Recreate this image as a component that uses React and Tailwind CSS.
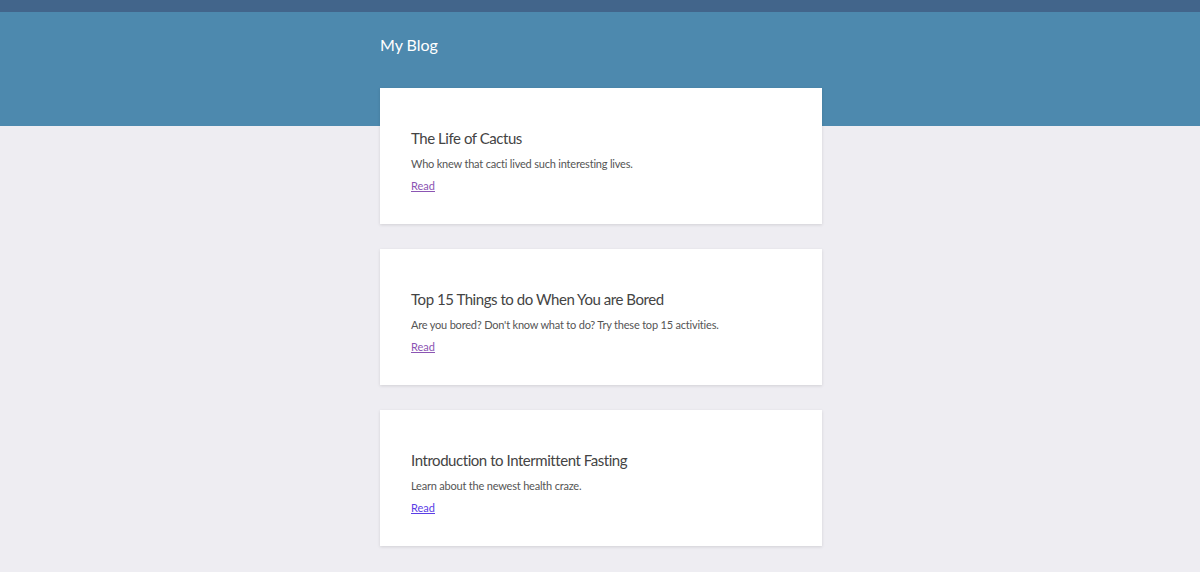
export default function App() {
  const posts = [
    { title: "The Life of Cactus", desc: "Who knew that cacti lived such interesting lives.", visited: true },
    { title: "Top 15 Things to do When You are Bored", desc: "Are you bored? Don't know what to do? Try these top 15 activities.", visited: true },
    { title: "Introduction to Intermittent Fasting", desc: "Learn about the newest health craze.", visited: false },
  ];
  return (
    <div className="min-h-[572px] bg-[#eeedf2] font-['Lato',sans-serif]">
      <div className="h-[12px] bg-[#42658b]" />
      <div className="h-[114px] bg-[#4d89ae]">
        <div className="mx-auto w-[442px] translate-x-[1px] pt-[23px] text-[16px] leading-[20px] text-white">My Blog</div>
      </div>
      <div className="mx-auto -mt-[38px] flex w-[442px] translate-x-[1px] flex-col gap-[25px] pb-[30px]">
        {posts.map((p) => (
          <div key={p.title} className="bg-white px-[31px] pt-[40px] pb-[30px] shadow-[0_1px_3px_rgba(0,0,0,0.12)]">
            <h2 className="text-[15px] leading-[20px] tracking-[-0.45px] text-[#444]">{p.title}</h2>
            <p className="mt-[7px] text-[11px] leading-[18px] tracking-[-0.2px] text-[#555]">{p.desc}</p>
            <a href="#" className={"mt-[5px] block w-fit text-[11px] leading-[16px] underline " + (p.visited ? "text-[#8b55b3]" : "text-[#5a3ee6]")}>Read</a>
          </div>
        ))}
      </div>
    </div>
  );
}
